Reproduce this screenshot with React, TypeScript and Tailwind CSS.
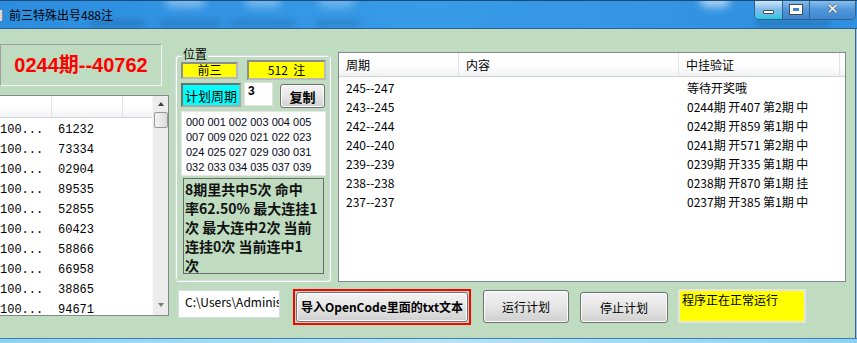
import React from "react";

const rowsLeft = ["61232", "73334", "02904", "89535", "52855", "60423", "58866", "66958", "38865", "94671"];

const tableRows: [string, string][] = [
  ["245--247", "等待开奖哦"],
  ["243--245", "0244期 开407 第2期 中"],
  ["242--244", "0242期 开859 第1期 中"],
  ["240--240", "0241期 开571 第2期 中"],
  ["239--239", "0239期 开335 第1期 中"],
  ["238--238", "0238期 开870 第1期 挂"],
  ["237--237", "0237期 开385 第1期 中"],
];

function TitleBar() {
  return (
    <div className="relative h-[29px] shrink-0 flex items-start overflow-hidden border-t border-[#1d4b78] border-b border-b-[#2a5f94] bg-gradient-to-r from-[#2c8ddf] via-[#389be8] to-[#2f8fe0]">
      {/* soft aero blur blobs */}
      <div className="absolute left-[165px] top-[-6px] w-[40px] h-[12px] rounded-full bg-white/40 blur-[4px]" />
      <div className="absolute left-[245px] top-[-6px] w-[36px] h-[12px] rounded-full bg-white/35 blur-[4px]" />
      <div className="absolute left-[318px] top-[-6px] w-[36px] h-[12px] rounded-full bg-white/30 blur-[4px]" />
      <div className="absolute left-[700px] top-[-8px] w-[30px] h-[14px] rounded-full bg-white/60 blur-[4px]" />
      <div className="absolute left-[90px] top-[19px] w-[55px] h-[6px] rounded-full bg-[#1d5f99]/50 blur-[3px]" />
      <div className="absolute left-[160px] top-[19px] w-[60px] h-[6px] rounded-full bg-[#1d5f99]/40 blur-[3px]" />
      <div className="absolute left-[230px] top-[19px] w-[65px] h-[6px] rounded-full bg-[#1d5f99]/40 blur-[3px]" />
      <div className="absolute left-[315px] top-[19px] w-[45px] h-[6px] rounded-full bg-[#1d5f99]/40 blur-[3px]" />
      <div className="absolute left-[755px] top-[19px] w-[75px] h-[6px] rounded-full bg-[#1d5f99]/50 blur-[3px]" />

      <div className="relative mt-[9px] w-[3px] h-[11px] bg-[#d8d8d8] border-r border-[#888]" />
      <div className="relative ml-[6px] mt-[6px] text-[12px] leading-[16px] text-black">前三特殊出号488注</div>
      <div className="flex-1" />
      <div className="relative mr-[1px] mt-[-1px] w-[102px] h-[20px] flex rounded-b-[5px] border border-t-0 border-[#36618c] overflow-hidden shadow-[inset_0_0_0_1px_rgba(255,255,255,0.35)]">
        <div className="w-[28px] h-full border-r border-[#36618c] bg-gradient-to-b from-[#d9eefc] via-[#7fbbe9] to-[#19c7e6] flex items-end justify-center pb-[5px]">
          <div className="w-[11px] h-[4px] bg-white border border-[#4a4a4a] rounded-[1px]" />
        </div>
        <div className="w-[27px] h-full border-r border-[#36618c] bg-gradient-to-b from-[#8fc3ee] via-[#4f97db] to-[#3d86d0] flex items-center justify-center">
          <div className="w-[12px] h-[9px] border-[3px] border-t-[3px] border-white outline outline-1 outline-[#4a4a4a] bg-[#3f86cf]" />
        </div>
        <div className="flex-1 h-full bg-gradient-to-b from-[#8fc3ee] via-[#4f97db] to-[#3d86d0] flex items-center justify-center">
          <span className="text-[15px] leading-none font-bold text-white [text-shadow:0_0_1px_#333,0_0_1px_#333] font-['DejaVu_Sans',sans-serif]">✕</span>
        </div>
      </div>
    </div>
  );
}

function LeftColumn() {
  return (
    <div className="w-[175px] shrink-0 flex flex-col">
      <div className="mt-[15px] w-[162px] h-[42px] border border-[#a0a0a0] border-r-[#f4f4f4] border-b-[#f4f4f4] flex items-center justify-center">
        <span className="text-[20px] font-bold leading-none text-[#ff0000] font-['Liberation_Sans','Noto_Sans_CJK_SC',sans-serif]">0244期--40762</span>
      </div>
      <div className="mt-[9px] w-[169px] h-[221px] border border-l-0 border-[#828790] bg-white flex overflow-hidden">
        <div className="w-[152px] flex flex-col">
          <div className="h-[22px] shrink-0 flex bg-gradient-to-b from-white via-white to-[#f1f2f4] border-b border-[#d5d5d5]">
            <div className="w-[52px] border-r border-[#e2e3e5]" />
            <div className="w-[71px] border-r border-[#e2e3e5]" />
            <div className="flex-1" />
          </div>
          <div className="pt-[2px] flex flex-col font-['Liberation_Mono',monospace] text-[12px] text-black">
            {rowsLeft.map((n) => (
              <div key={n} className="h-[20px] shrink-0 flex items-center whitespace-pre leading-none">
                <span className="w-[58px]">100...</span>
                <span>{n}</span>
              </div>
            ))}
          </div>
        </div>
        <div className="w-[16px] h-full bg-[#ececec] border-l border-[#f8f8f8] flex flex-col items-center">
          <div className="h-[16px] w-full flex items-center justify-center">
            <div className="w-0 h-0 border-l-[3px] border-r-[3px] border-b-[4px] border-l-transparent border-r-transparent border-b-[#3c3c3c]" />
          </div>
          <div className="w-[14px] h-[16px] rounded-[2px] border border-[#979797] bg-gradient-to-r from-[#f3f3f3] to-[#dcdcdc]" />
          <div className="flex-1" />
          <div className="h-[16px] w-full flex items-center justify-center mb-[2px]">
            <div className="w-0 h-0 border-l-[3px] border-r-[3px] border-t-[4px] border-l-transparent border-r-transparent border-t-[#7a7a7a]" />
          </div>
        </div>
      </div>
    </div>
  );
}

function GroupBox() {
  return (
    <div className="relative mt-[3px] w-[155px] h-[226px] rounded-[3px] border border-[#d3dce2] shadow-[inset_1px_1px_0_#ffffff,1px_1px_0_#ffffff] flex flex-col pl-[5px]">
      <div className="absolute left-[6px] top-[-9px] px-[1px] bg-[#c0dcc0] text-[12px] leading-[14px]">位置</div>
      <div className="mt-[4px] h-[20px] flex items-center">
        <div className="w-[57px] h-[17px] bg-[#ffff00] border-2 border-[#8d8d8d] border-r-[#b9b9b9] border-b-[#b9b9b9] flex items-center justify-center text-[12px] leading-none">前三</div>
        <div className="ml-[9px] w-[79px] h-[20px] bg-[#ffff00] border-2 border-[#8d8d8d] border-r-[#b9b9b9] border-b-[#b9b9b9] flex items-center justify-center text-[12px] leading-none whitespace-pre">512  注</div>
      </div>
      <div className="mt-[2px] h-[26px] flex items-start">
        <div className="mt-[1px] w-[60px] h-[24px] bg-[#00ffff] border-2 border-[#6f6f6f] border-r-[#a8a8a8] border-b-[#a8a8a8] flex items-center justify-center text-[13px] leading-none">计划周期</div>
        <div className="ml-[3px] w-[29px] h-[24px] bg-white border border-[#e2e2e2] pl-[3px] pt-[1px] text-[12px] font-bold leading-[14px] font-['Liberation_Sans',sans-serif]">3</div>
        <div className="ml-[7px] mt-[2px] w-[45px] h-[24px] rounded-[3px] border border-[#707070] bg-gradient-to-b from-[#f4f4f4] via-[#e6e6e6] to-[#d0d0d0] shadow-[inset_0_0_0_1px_#fcfcfc] flex items-center justify-center text-[13px] font-bold leading-none">复制</div>
      </div>
      <div className="mt-[3px] w-[145px] h-[65px] bg-white border border-[#e6e6e6] pl-[4px] pt-[3px] font-['Liberation_Sans',sans-serif] text-[11px] leading-[15px] text-[#050520] whitespace-nowrap">
        <div>000 001 002 003 004 005</div>
        <div>007 009 020 021 022 023</div>
        <div>024 025 027 029 030 031</div>
        <div>032 033 034 035 037 039</div>
      </div>
      <div className="mt-[2px] ml-[2px] w-[141px] h-[96px] border border-[#6a6a6a] pl-[1px] pt-[1px] text-[14px] font-bold leading-[19px] whitespace-nowrap overflow-hidden text-[#111]">
        <div>8期里共中5次 命中</div>
        <div>率62.50% 最大连挂1</div>
        <div>次 最大连中2次 当前</div>
        <div>连挂0次 当前连中1</div>
        <div>次</div>
      </div>
    </div>
  );
}

function Table() {
  return (
    <div className="ml-[8px] w-[508px] h-[230px] border border-[#828790] bg-white flex flex-col">
      <div className="h-[24px] shrink-0 flex bg-gradient-to-b from-white via-white to-[#f1f2f4] border-b border-[#d5d5d5] text-[12px] leading-none">
        <div className="w-[120px] border-r border-[#e2e3e5] pl-[7px] flex items-center">周期</div>
        <div className="w-[220px] border-r border-[#e2e3e5] pl-[7px] flex items-center">内容</div>
        <div className="w-[161px] border-r border-[#e2e3e5] pl-[7px] flex items-center">中挂验证</div>
        <div className="flex-1" />
      </div>
      <div className="mt-[1px] flex flex-col text-[12px] leading-none">
        {tableRows.map(([a, b]) => (
          <div key={a} className="h-[19px] flex items-center">
            <div className="w-[121px] pl-[7px]">{a}</div>
            <div className="w-[220px]" />
            <div className="pl-[7px] whitespace-nowrap">{b}</div>
          </div>
        ))}
      </div>
    </div>
  );
}

function BottomRow() {
  const btn =
    "rounded-[3px] border border-[#707070] bg-gradient-to-b from-[#f3f3f3] via-[#e5e5e5] to-[#cfcfcf] shadow-[inset_0_0_0_1px_#fbfbfb] flex items-center justify-center text-[12px] leading-none";
  return (
    <div className="mt-[7px] ml-[3px] flex items-start">
      <div className="mt-[1px] w-[102px] h-[28px] bg-white border border-[#d8dde2] pl-[6px] pt-[4px] text-[12px] leading-[14px] whitespace-nowrap overflow-hidden">C:\Users\Adminis</div>
      <div className="ml-[13px] w-[178px] h-[36px] border-2 border-[#ff0000] p-[1px]">
        <div className={btn + " w-full h-full font-bold"}>导入OpenCode里面的txt文本</div>
      </div>
      <div className={btn + " ml-[12px] mt-[1px] w-[86px] h-[33px]"}>运行计划</div>
      <div className={btn + " ml-[11px] mt-[3px] w-[88px] h-[31px]"}>停止计划</div>
      <div className="ml-[10px] w-[128px] h-[34px] bg-[#ffff00] border-2 border-[#e4e4e4] pl-[2px] pt-[2px] text-[12px] leading-[14px]">程序正在正常运行</div>
    </div>
  );
}

export default function App() {
  return (
    <div className="w-[857px] h-[343px] overflow-hidden bg-[#c0dcc0] font-['Noto_Sans_CJK_SC',sans-serif] text-black flex flex-col">
      <TitleBar />
      <div className="flex h-[309px] shrink-0">
        <div className="flex w-[855px]">
          <LeftColumn />
          <div className="flex-1 flex flex-col">
            <div className="mt-[23px] h-[230px] flex items-start">
              <GroupBox />
              <Table />
            </div>
            <BottomRow />
          </div>
        </div>
        <div className="w-px bg-[#3d6584]" />
        <div className="w-px bg-[#9fc3e0]" />
      </div>
      <div className="h-[5px] shrink-0 border-t border-[#3f7fb8] bg-gradient-to-r from-[#8fd0f2] via-[#b7e3f7] to-[#8fd0f2]" />
    </div>
  );
}
